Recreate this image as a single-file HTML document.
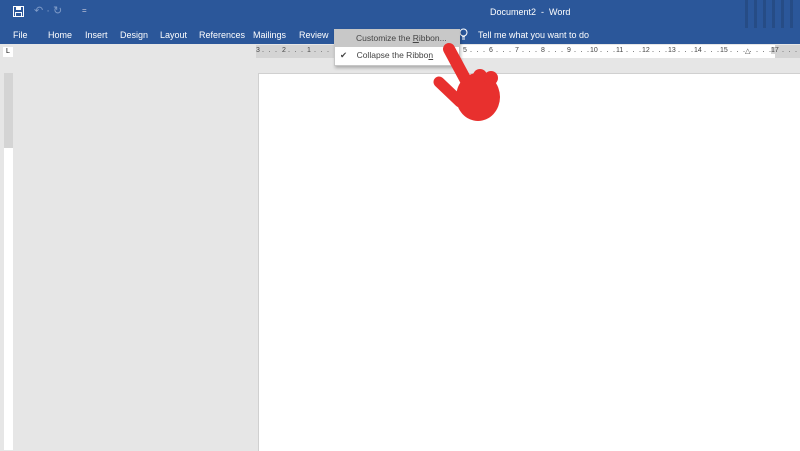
<!DOCTYPE html><html><head><style>
body{margin:0;width:800px;height:450px;overflow:hidden;background:#e6e6e6;font-family:"Liberation Sans",sans-serif;position:relative}
.top{position:absolute;left:0;top:0;width:800px;height:44px;background:#2b579a;color:#fff}
.t{position:absolute;font-size:9px;top:30px}
.ruler{position:absolute;left:256px;top:45px;width:544px;height:13px;background:#fff;font-size:7px;color:#444;white-space:nowrap}
.ruler span{position:absolute;top:2px;background:inherit}
.page{position:absolute;left:258px;top:73px;width:542px;height:377px;background:#fff;border-left:1px solid #d0d0d0;border-top:1px solid #d0d0d0}
.menu{position:absolute;left:334px;top:29px;width:124px;height:35px;background:#fff;border:1px solid #c6c6c6;box-shadow:1px 2px 3px rgba(0,0,0,.25);font-size:8.5px;color:#444}
</style></head><body>
<div class="top">
<svg style="position:absolute;left:13px;top:6px" width="11" height="11"><rect x="0.5" y="0.5" width="10" height="10" fill="none" stroke="#fff"/><rect x="3" y="1" width="5" height="3" fill="#fff"/><rect x="2.5" y="6.5" width="6" height="4" fill="none" stroke="#fff"/></svg>
<span style="position:absolute;left:34px;top:4px;font-size:11px;color:#7f9bc8">↶ · ↻</span>
<span style="position:absolute;left:82px;top:6px;font-size:8px;color:#ccd">=</span>
<div style="position:absolute;left:490px;top:7px;font-size:9px">Document2 &nbsp;- &nbsp;Word</div>
<div style="position:absolute;left:745px;top:0;width:50px;height:28px;opacity:.2;background:repeating-linear-gradient(90deg,#123 0 3px,transparent 3px 9px)"></div>
<span class="t" style="left:13px">File</span><span class="t" style="left:48px">Home</span><span class="t" style="left:85px">Insert</span><span class="t" style="left:120px">Design</span><span class="t" style="left:160px">Layout</span><span class="t" style="left:199px">References</span><span class="t" style="left:253px">Mailings</span><span class="t" style="left:299px">Review</span>
<svg style="position:absolute;left:459px;top:28px" width="9" height="12"><circle cx="4.5" cy="4.5" r="3.5" fill="none" stroke="#fff"/><path d="M3 9h3M3 11h3" stroke="#fff"/></svg>
<span class="t" style="left:478px">Tell me what you want to do</span>
</div>
<div style="position:absolute;left:3px;top:47px;width:10px;height:10px;background:#fff;font-size:7px;line-height:10px;text-align:center">L</div>
<div class="ruler">
<div style="position:absolute;left:0;top:0;width:80px;height:13px;background:#d4d4d4"></div>
<div style="position:absolute;left:519px;top:0;width:25px;height:13px;background:#d4d4d4"></div>
<div style="position:absolute;left:0;top:6px;width:544px;height:1px;background:repeating-linear-gradient(90deg,#888 0 1px,transparent 1px 6.5px)"></div>
<span style="left:0;background:#d4d4d4">3</span><span style="left:26px;background:#d4d4d4">2</span><span style="left:51px;background:#d4d4d4">1</span>
<span style="left:207px">5</span><span style="left:233px">6</span><span style="left:259px">7</span><span style="left:285px">8</span><span style="left:311px">9</span><span style="left:334px">10</span><span style="left:360px">11</span><span style="left:386px">12</span><span style="left:412px">13</span><span style="left:438px">14</span><span style="left:464px">15</span>
<span style="left:489px">△</span><span style="left:515px;background:#d4d4d4">17</span>
</div>
<div style="position:absolute;left:4px;top:73px;width:9px;height:377px;background:#fff"><div style="height:75px;background:#d4d4d4"></div></div>
<div class="page"></div>
<div class="menu">
<div style="height:17px;background:#c8c8c8;line-height:17px;padding-left:21px">Customize the <u>R</u>ibbon...</div>
<div style="height:17px;line-height:17px;padding-left:5px">✔ &nbsp;&nbsp;&nbsp;Collapse the Ribbo<u>n</u></div>
</div>
<svg style="position:absolute;left:430px;top:40px" width="75" height="85" viewBox="0 0 75 85">
<g fill="#e8302e" stroke="#e8302e" stroke-linecap="round">
<line x1="19" y1="9" x2="40" y2="48" stroke-width="12"/>
<line x1="9" y1="42" x2="30" y2="62" stroke-width="11"/>
<ellipse cx="48" cy="57" rx="22" ry="24" stroke="none"/>
<circle cx="50" cy="36" r="7" stroke="none"/>
<circle cx="61" cy="38" r="7" stroke="none"/>
</g>
</svg>
</body></html>
